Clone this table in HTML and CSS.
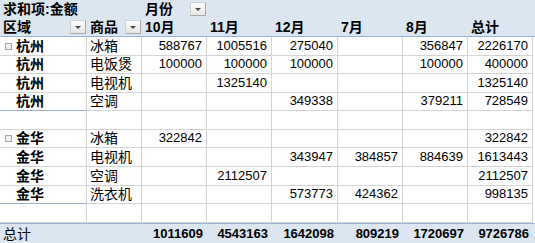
FILE: index.html
```html
<!DOCTYPE html>
<html lang="zh">
<head>
<meta charset="utf-8">
<title>数据透视表</title>
<link rel="stylesheet" href="styles.css">
</head>
<body>
<table class="pivot">
  <colgroup>
    <col class="w-a"><col class="w-b"><col class="w-n"><col class="w-n"><col class="w-e"><col class="w-n"><col class="w-n"><col class="w-n"><col class="w-x">
  </colgroup>
  <tr class="hdr r18">
    <td colspan="2" class="bold">求和项:金额</td>
    <td class="bold"><div class="cellflex"><span>月份</span><span class="dd"></span></div></td>
    <td></td><td></td><td></td><td></td><td></td><td></td>
  </tr>
  <tr class="hdr hdr2 r19">
    <td class="bold"><div class="cellflex"><span>区域</span><span class="dd"></span></div></td>
    <td class="bold"><div class="cellflex"><span>商品</span><span class="dd"></span></div></td>
    <td class="bold">10月</td>
    <td class="bold">11月</td>
    <td class="bold">12月</td>
    <td class="bold">7月</td>
    <td class="bold">8月</td>
    <td class="bold">总计</td>
    <td></td>
  </tr>
  <tr class="data r19">
    <td class="area"><span class="box"></span>杭州</td><td class="prod">冰箱</td>
    <td class="num">588767</td><td class="num">1005516</td><td class="num">275040</td><td class="num"></td><td class="num">356847</td><td class="num">2226170</td><td class="gap"></td>
  </tr>
  <tr class="data r18">
    <td class="area indent">杭州</td><td class="prod">电饭煲</td>
    <td class="num">100000</td><td class="num">100000</td><td class="num">100000</td><td class="num"></td><td class="num">100000</td><td class="num">400000</td><td class="gap"></td>
  </tr>
  <tr class="data r19">
    <td class="area indent">杭州</td><td class="prod">电视机</td>
    <td class="num"></td><td class="num">1325140</td><td class="num"></td><td class="num"></td><td class="num"></td><td class="num">1325140</td><td class="gap"></td>
  </tr>
  <tr class="data r18 grp-end">
    <td class="area indent">杭州</td><td class="prod">空调</td>
    <td class="num"></td><td class="num"></td><td class="num">349338</td><td class="num"></td><td class="num">379211</td><td class="num">728549</td><td class="gap"></td>
  </tr>
  <tr class="data r19">
    <td class="area"></td><td class="prod"></td>
    <td class="num"></td><td class="num"></td><td class="num"></td><td class="num"></td><td class="num"></td><td class="num"></td><td class="gap"></td>
  </tr>
  <tr class="data r18">
    <td class="area"><span class="box"></span>金华</td><td class="prod">冰箱</td>
    <td class="num">322842</td><td class="num"></td><td class="num"></td><td class="num"></td><td class="num"></td><td class="num">322842</td><td class="gap"></td>
  </tr>
  <tr class="data r19">
    <td class="area indent">金华</td><td class="prod">电视机</td>
    <td class="num"></td><td class="num"></td><td class="num">343947</td><td class="num">384857</td><td class="num">884639</td><td class="num">1613443</td><td class="gap"></td>
  </tr>
  <tr class="data r19">
    <td class="area indent">金华</td><td class="prod">空调</td>
    <td class="num"></td><td class="num">2112507</td><td class="num"></td><td class="num"></td><td class="num"></td><td class="num">2112507</td><td class="gap"></td>
  </tr>
  <tr class="data r18 grp-end">
    <td class="area indent">金华</td><td class="prod">洗衣机</td>
    <td class="num"></td><td class="num"></td><td class="num">573773</td><td class="num">424362</td><td class="num"></td><td class="num">998135</td><td class="gap"></td>
  </tr>
  <tr class="data r19">
    <td class="area"></td><td class="prod"></td>
    <td class="num"></td><td class="num"></td><td class="num"></td><td class="num"></td><td class="num"></td><td class="num"></td><td class="gap"></td>
  </tr>
  <tr class="total r20">
    <td class="label">总计</td><td></td>
    <td class="num">1011609</td><td class="num">4543163</td><td class="num">1642098</td><td class="num">809219</td><td class="num">1720697</td><td class="num">9726786</td><td></td>
  </tr>
</table>
</body>
</html>
```
FILE: styles.css
```css
html, body {
  margin: 0;
  padding: 0;
  background: #ffffff;
}

.pivot {
  border-collapse: separate;
  border-spacing: 0;
  table-layout: fixed;
  width: 535px;
  font-family: "Liberation Sans", "Noto Sans CJK SC", sans-serif;
  font-size: 14px;
  color: #000;
}

.w-a { width: 87px; }
.w-b { width: 55px; }
.w-n { width: 65px; }
.w-e { width: 66px; }
.w-x { width: 2px; }

.pivot td {
  box-sizing: border-box;
  padding: 0 3px;
  line-height: 16px;
  vertical-align: bottom;
  white-space: nowrap;
  overflow: visible;
}

.r18 td { height: 18px; }
.r19 td { height: 19px; }
.r20 td { height: 20px; }

.bold { font-weight: bold; }

/* header rows */
.hdr td {
  background: #dce6f1;
  padding-bottom: 1px;
}
.hdr2 td {
  border-bottom: 1px solid #95b3d7;
}

.cellflex {
  display: flex;
  justify-content: space-between;
  align-items: center;
  margin-right: -3px;
}

.dd {
  position: relative;
  display: inline-block;
  width: 16px;
  height: 14px;
  box-sizing: border-box;
  background: linear-gradient(#fdfdfd, #e6e6e6);
  border: 1px solid #d0d0d0;
  border-right-color: #a8a8a8;
  border-bottom-color: #a8a8a8;
  margin-right: 1px;
}
.dd::after {
  content: "";
  position: absolute;
  left: 4px;
  top: 5px;
  border-left: 3px solid transparent;
  border-right: 3px solid transparent;
  border-top: 3px solid #4a4a4a;
}

/* data rows */
.data td {
  border-right: 1px solid #d4d4d4;
  border-bottom: 1px solid #d4d4d4;
  padding-bottom: 1px;
}
.data td.gap {
  border: none;
}
.grp-end td.area {
  border-bottom-color: #95b3d7;
}

.area {
  font-weight: bold;
  padding-left: 5px !important;
}
.area.indent {
  padding-left: 16px !important;
}
.prod {
  padding-left: 3px;
}

.box {
  display: inline-block;
  width: 7px;
  height: 7px;
  box-sizing: border-box;
  border: 1px solid #a6a6a6;
  background: #f2f2f2;
  margin-right: 4px;
  vertical-align: 1px;
}

.num {
  text-align: right;
  font-size: 13px;
  padding-right: 4px !important;
}

/* total row */
.total td {
  background: #dce6f1;
  border-top: 1px solid #95b3d7;
  padding-bottom: 1px;
}
.total td.num {
  font-weight: bold;
}
.total td.label {
  font-weight: normal;
}
```
